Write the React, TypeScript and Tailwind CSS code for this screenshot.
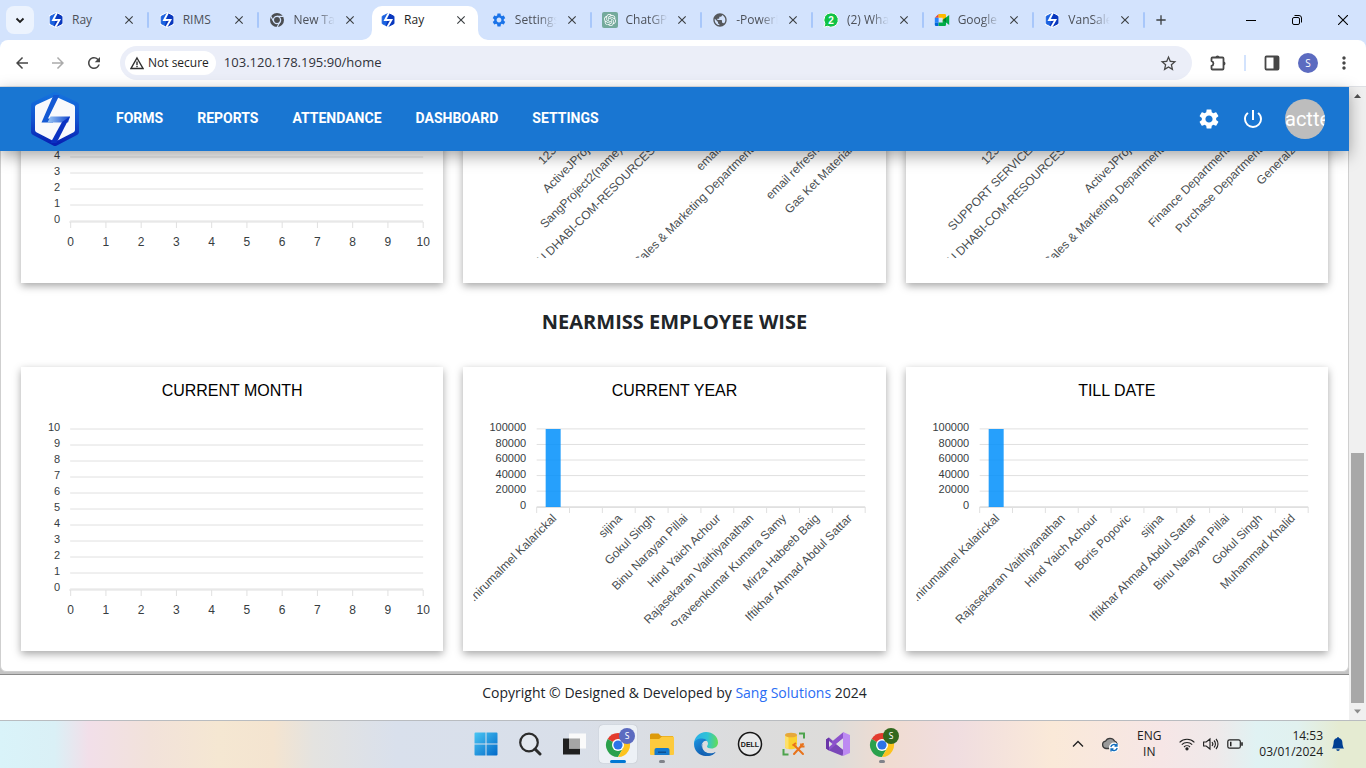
import { useId, type ReactNode } from 'react';
import { BsBellFill } from 'react-icons/bs';
import {
  MdAdd,
  MdArrowBack,
  MdArrowForward,
  MdClose,
  MdMoreVert,
  MdPowerSettingsNew,
  MdPublic,
  MdRefresh,
  MdSettings,
  MdStarBorder,
} from 'react-icons/md';
import { SiOpenai } from 'react-icons/si';

/* ---------- logos ---------- */

function RayMark({ className }: { className: string }) {
  return (
    <svg viewBox="0 0 16 16" className={className} aria-hidden="true">
      <path d="M8 .8 14.300 4v8L8 15.200 1.700 12V4z" fill="#fff" stroke="#fff" strokeWidth="1.500" strokeLinejoin="round" />
      <path d="M8 1.500 13.800 4.400v7.200L8 14.500l-5.800-2.900V4.400z" fill="#1b62e0" stroke="#1b62e0" strokeLinejoin="round" />
      <path d="M9.500 2 13.800 4.400v7.200L8 14.500l-1.500-.8z" fill="#0a37bd" stroke="#0a37bd" strokeLinejoin="round" />
      <path d="M8.800 1 5 8h3.800M7 7.800h4.500L7.400 15" fill="none" stroke="#fff" strokeWidth="1.800" />
    </svg>
  );
}

function RayLogo() {
  const id = useId();
  return (
    <svg viewBox="0 0 50 56" className="h-14 w-[50px]" aria-hidden="true">
      <defs>
        <linearGradient id={id + 'h'} x1="0" y1="0" x2="0" y2="1">
          <stop offset="0" stopColor="#1470dc" />
          <stop offset="0.5" stopColor="#1254d0" />
          <stop offset="1" stopColor="#0722b4" />
        </linearGradient>
        <linearGradient id={id + 'b'} x1="0" y1="0" x2="1" y2="0">
          <stop offset="0" stopColor="#9cc8f6" />
          <stop offset="1" stopColor="#0f45cc" />
        </linearGradient>
      </defs>
      <path
        d="M25 4 46 14v27L25 52 4 41V14z"
        fill={`url(#${id}h)`}
        stroke={`url(#${id}h)`}
        strokeWidth="6"
        strokeLinejoin="round"
      />
      <path d="M25 8 42.500 16v23L25 48 7.500 39V16z" fill="#f8f9fc" stroke="#f8f9fc" strokeWidth="5" strokeLinejoin="round" />
      <path d="M23.500 4h6L18 27.500h5v4H11.500z" fill="#1459d4" />
      <path d="M20.500 25.500H40L38 31.500H17.500z" fill={`url(#${id}b)`} />
      <path d="M32 31 20.500 52h6L40 25.500z" fill="#0a31c2" />
    </svg>
  );
}

function ChromeGray() {
  return (
    <svg viewBox="0 0 16 16" className="size-4" aria-hidden="true">
      <circle cx="8" cy="8" r="7" fill="#4a4d51" />
      <circle cx="8" cy="8" r="3.600" fill="none" stroke="#d3e3fd" strokeWidth="1.300" />
      <path d="M8 4.400h6.400M4.900 9.800 1.700 4.300M11.100 9.800 8 15.200" stroke="#d3e3fd" strokeWidth="1.200" />
    </svg>
  );
}

function WhatsAppBadge() {
  return (
    <svg viewBox="0 0 16 16" className="size-4" aria-hidden="true">
      <path d="M8 .8a7.200 7.200 0 1 1-3.400 13.500L.9 15.200l1-3.500A7.200 7.200 0 0 1 8 .8z" fill="#10c245" stroke="#fff" />
      <text x="8" y="11.700" textAnchor="middle" fill="#fff" fontSize="10" fontWeight="700" fontFamily="Liberation Sans, sans-serif">
        2
      </text>
    </svg>
  );
}

function MeetLogo() {
  return (
    <svg viewBox="0 0 16 16" className="size-4" aria-hidden="true">
      <path d="M.8 5.800 4.600 2v3.800z" fill="#ea4335" />
      <path d="M.8 5.800h3.800v4.700H.8z" fill="#2684fc" />
      <path d="M.8 10.500h3.800V14H2a1.200 1.200 0 0 1-1.200-1.200z" fill="#0066da" />
      <path d="M4.600 2h6.200a1.200 1.200 0 0 1 1.200 1.200V8l-3.300 2V5.800H4.600z" fill="#ffba00" />
      <path d="M8.700 10.500V8L15.200 3v10L12 10.500v2.300a1.200 1.200 0 0 1-1.200 1.200H4.600v-3.500z" fill="#00ac47" />
      <path d="M12 5.500V10.500L9 8z" fill="#00832d" />
    </svg>
  );
}

function ChatGptLogo() {
  return (
    <span className="flex size-4 items-center justify-center rounded-xs bg-[#74aa9c] text-white">
      <SiOpenai className="size-3" />
    </span>
  );
}

/* ---------- browser chrome ---------- */

type TabInfo = { title: string; icon: ReactNode; fade?: boolean; active?: boolean; divider?: boolean };

const ray = <RayMark className="size-4" />;

const tabs: TabInfo[] = [
  { title: 'Ray', icon: ray, divider: true },
  { title: 'RIMS', icon: ray, divider: true },
  { title: 'New Tab', icon: <ChromeGray />, fade: true },
  { title: 'Ray', icon: ray, active: true },
  { title: 'Settings', icon: <MdSettings className="size-4 text-[#1a73e8]" />, fade: true, divider: true },
  { title: 'ChatGPT', icon: <ChatGptLogo />, fade: true, divider: true },
  { title: '-PowerB', icon: <MdPublic className="size-4 text-[#55585c]" />, fade: true, divider: true },
  { title: '(2) Wha', icon: <WhatsAppBadge />, fade: true, divider: true },
  { title: 'Google', icon: <MeetLogo />, fade: true, divider: true },
  { title: 'VanSale', icon: ray, fade: true, divider: true },
];

function Tab({ tab }: { tab: TabInfo }) {
  return (
    <div className="relative flex min-w-0 flex-1 pt-[6px]">
      {tab.active && (
        <svg viewBox="0 0 126 34" preserveAspectRatio="none" className="absolute -left-2 bottom-0 h-[34px] w-[126px]" aria-hidden="true">
          <path d="M0 34a10 10 0 0 0 10-10V10A10 10 0 0 1 20 0h86a10 10 0 0 1 10 10v14a10 10 0 0 0 10 10z" fill="#fff" />
        </svg>
      )}
      <div className="relative flex h-7 min-w-0 flex-1 items-center pl-[10px] pr-[10px]">
        <span className="flex size-4 shrink-0 items-center justify-center">{tab.icon}</span>
        <span
          className={
            'ml-2 w-11 shrink-0 overflow-hidden whitespace-nowrap text-xs ' +
            (tab.active ? 'text-[#1f1f1f] ' : 'text-[#4c5058] ') +
            (tab.fade ? '[mask-image:linear-gradient(to_right,black_55%,transparent_95%)]' : '')
          }
        >
          {tab.title}
        </span>
        <button type="button" aria-label={'Close ' + tab.title} className="ml-auto flex size-4 shrink-0 items-center justify-center text-[#3c4043]">
          <MdClose className="size-3.5" />
        </button>
      </div>
      {tab.divider && <span className="my-[6px] h-4 w-0.5 shrink-0 rounded-full bg-[#a8c7fa]" />}
      {!tab.divider && <span className="w-0.5 shrink-0" />}
    </div>
  );
}

function TabStrip() {
  return (
    <div className="flex h-10 shrink-0 bg-[#d3e3fd] pl-[6px]">
      <button type="button" aria-label="Search tabs" className="mt-[6px] flex size-7 shrink-0 items-center justify-center rounded-lg bg-[#ecf3fe]">
        <svg viewBox="0 0 12 12" className="size-3" aria-hidden="true">
          <path d="m2.500 4.500 3.500 3.500 3.500-3.500" fill="none" stroke="#1f1f1f" strokeWidth="1.800" />
        </svg>
      </button>
      <div className="ml-1 flex min-w-0 max-w-[1107px] flex-1">
        {tabs.map((t, i) => (
          <Tab key={i} tab={t} />
        ))}
      </div>
      <button type="button" aria-label="New tab" className="flex w-8 items-center justify-center text-[#3c4043]">
        <MdAdd className="size-4" />
      </button>
      <div className="ml-auto flex shrink-0">
        <button type="button" aria-label="Minimize" className="flex w-[46px] items-center justify-center">
          <span className="h-px w-[10px] bg-black" />
        </button>
        <button type="button" aria-label="Restore" className="flex w-[46px] items-center justify-center">
          <svg viewBox="0 0 10 10" className="size-[10px]" fill="none" stroke="#000" aria-hidden="true">
            <rect x="0.500" y="2.500" width="7" height="7" rx="1.500" />
            <path d="M2.500.5h4.500a2.500 2.500 0 0 1 2.500 2.500v4.500" />
          </svg>
        </button>
        <button type="button" aria-label="Close window" className="flex w-[46px] items-center justify-center">
          <svg viewBox="0 0 10 10" className="size-[10px]" fill="none" stroke="#000" aria-hidden="true">
            <path d="m0 0 10 10M10 0 0 10" strokeWidth="1.100" />
          </svg>
        </button>
      </div>
    </div>
  );
}

function AddressBar() {
  return (
    <div className="shrink-0 bg-[#d3e3fd]">
      <div className="flex h-[47px] items-center rounded-t-lg border-b border-[#dfe1e5] bg-white pl-1 text-[#474747]">
        <button type="button" aria-label="Back" className="flex w-9 justify-center">
          <MdArrowBack className="size-[18px]" />
        </button>
        <button type="button" aria-label="Forward" className="flex w-9 justify-center text-[#ababab]">
          <MdArrowForward className="size-[18px]" />
        </button>
        <button type="button" aria-label="Reload" className="flex w-9 justify-center">
          <MdRefresh className="size-[18px]" />
        </button>
        <div className="ml-2 flex h-[34px] flex-1 items-center rounded-full bg-[#ebeef8] pl-[5px]">
          <button type="button" className="flex h-6 items-center gap-1 rounded-full bg-white px-[5px] pr-[7px] text-xs text-[#1f1f1f]">
            <svg viewBox="0 0 14 14" className="size-[14px]" fill="none" stroke="#303030" strokeWidth="1.400" aria-hidden="true">
              <path d="M7 2 13 12.500H1z" />
              <path d="M7 5.500v3.500M7 9.800v1.400" />
            </svg>
            Not secure
          </button>
          <input
            aria-label="Address"
            defaultValue="103.120.178.195:90/home"
            className="ml-2 min-w-0 flex-1 bg-transparent text-[13px] text-[#30323a] outline-none"
          />
          <button type="button" aria-label="Bookmark" className="flex w-12 justify-center">
            <MdStarBorder className="size-[19px]" />
          </button>
        </div>
        <div className="flex items-center">
          <button type="button" aria-label="Extensions" className="flex w-[52px] justify-center">
            <svg viewBox="0 0 18 18" className="size-[18px]" aria-hidden="true">
              <path
                d="M2.500 4.500a1 1 0 0 1 1-1h10a1 1 0 0 1 1 1v10a1 1 0 0 1-1 1h-10a1 1 0 0 1-1-1v-2.700a2.400 2.400 0 0 0 0-4.700z"
                fill="none"
                stroke="#474747"
                strokeWidth="1.800"
                strokeLinejoin="round"
              />
              <path d="M6.500 3.500a2 2 0 0 1 4 0zM14.500 7.500a2 2 0 0 1 0 4z" fill="#474747" />
            </svg>
          </button>
          <span className="h-4 w-0.5 bg-[#d3e3fd]" />
          <button type="button" aria-label="Side panel" className="flex w-[52px] justify-center">
            <svg viewBox="0 0 16 16" className="size-4" aria-hidden="true">
              <rect x="1.500" y="1.500" width="13" height="13" rx="1" fill="none" stroke="#474747" strokeWidth="1.800" />
              <path d="M9.500 1h5v14h-5z" fill="#474747" />
            </svg>
          </button>
          <button type="button" aria-label="Profile" className="mr-1 flex size-5 items-center justify-center rounded-full bg-[#5c6bc0] text-[10px] text-white">
            S
          </button>
          <button type="button" aria-label="Menu" className="flex w-11 justify-center">
            <MdMoreVert className="size-5" />
          </button>
        </div>
      </div>
    </div>
  );
}

/* ---------- charts ---------- */

function Card({ title, children }: { title: string; children: ReactNode }) {
  return (
    <section className="min-w-0 bg-white pt-3 shadow-[0_3px_8px_rgba(0,0,0,0.35)]">
      <h3 className="text-center font-['Liberation_Sans',sans-serif] text-base text-black">{title}</h3>
      {children}
    </section>
  );
}

const steps = [0, 1, 2, 3, 4, 5, 6, 7, 8, 9, 10];

function EmptyChart() {
  return (
    <svg viewBox="0 0 422 248" className="block h-[248px] w-full font-['Liberation_Sans',sans-serif]" role="img" aria-label="No data">
      {steps.map((n) => (
        <g key={n}>
          <path d={`M49 ${186 - n * 16}H402`} stroke="#e0e0e0" />
          <text x="39" y={188 - n * 16} fontSize="11" textAnchor="end" fill="#373d3f">
            {n}
          </text>
          <path d={`M${49.5 + n * 35.25} 187v6`} stroke="#e0e0e0" />
          <text x={49.5 + n * 35.25} y="211" fontSize="12" textAnchor="middle" fill="#373d3f">
            {n}
          </text>
        </g>
      ))}
      <path d="M48 187H402" stroke="#e0e0e0" />
    </svg>
  );
}

function BarChart({ labels }: { labels: string[] }) {
  const id = useId();
  const left = 73.5;
  const cell = 32.85;
  const right = left + cell * 10;
  return (
    <svg viewBox="0 0 422 248" className="block h-[248px] w-full font-['Liberation_Sans',sans-serif]" role="img" aria-label="Bar chart">
      <clipPath id={id}>
        <rect x="10" y="0" width="402" height="223" />
      </clipPath>
      {[0, 20000, 40000, 60000, 80000, 100000].map((v, i) => (
        <g key={v}>
          <path d={`M${left} ${103.7 - i * 15.56}H${right}`} stroke="#e0e0e0" />
          <text x="63" y={106 - i * 15.56} fontSize="11" textAnchor="end" fill="#373d3f">
            {v}
          </text>
        </g>
      ))}
      <path d={`M${left} 104.500H${right}`} stroke="#e0e0e0" />
      {steps.map((n) => (
        <path key={n} d={`M${left + n * cell} 104v6`} stroke="#e0e0e0" />
      ))}
      <rect x="82.500" y="26" width="15" height="78" fill="#008ffb" fillOpacity="0.85" />
      <g clipPath={`url(#${id})`}>
        {labels.map((label, i) => (
          <text
            key={i}
            transform={`translate(${left + cell * (i + 0.5) + 4} 116) rotate(-45)`}
            fontSize="12"
            textAnchor="end"
            fill="#4a4f52"
          >
            {label}
          </text>
        ))}
      </g>
    </svg>
  );
}

const projectYear = [
  '123',
  'ActiveJProj',
  'SangProject2(name)',
  'ABU DHABI-COM-RESOURCES',
  '',
  'email',
  'Sales & Marketing Department',
  '',
  'email refresh',
  'Gas Ket Material',
];
const projectTotal = [
  '123',
  'SUPPORT SERVICE',
  'ABU DHABI-COM-RESOURCES',
  '',
  'ActiveJProj',
  'Sales & Marketing Department',
  '',
  'Finance Department',
  'Purchase Department',
  'Generalz',
];
const employeeYear = [
  '.nirumalmel Kalarickal',
  '',
  'sijina',
  'Gokul Singh',
  'Binu Narayan Pillai',
  'Hind Yaich Achour',
  'Rajasekaran Vaithiyanathan',
  'Praveenkumar Kumara Samy',
  'Mirza Habeeb Baig',
  'Iftikhar Ahmad Abdul Sattar',
];
const employeeTotal = [
  '.nirumalmel Kalarickal',
  '',
  'Rajasekaran Vaithiyanathan',
  'Hind Yaich Achour',
  'Boris Popovic',
  'sijina',
  'Iftikhar Ahmad Abdul Sattar',
  'Binu Narayan Pillai',
  'Gokul Singh',
  'Muhammad Khalid',
];

function ChartRow({ year, total }: { year: string[]; total: string[] }) {
  return (
    <div className="grid grid-cols-3 gap-5">
      <Card title="CURRENT MONTH">
        <EmptyChart />
      </Card>
      <Card title="CURRENT YEAR">
        <BarChart labels={year} />
      </Card>
      <Card title="TILL DATE">
        <BarChart labels={total} />
      </Card>
    </div>
  );
}

/* ---------- page ---------- */

const menu = ['FORMS', 'REPORTS', 'ATTENDANCE', 'DASHBOARD', 'SETTINGS'];

function Header() {
  return (
    <header className="relative z-10 flex h-16 shrink-0 items-center bg-[#1976d2] pl-[30px] pr-6 font-[Roboto,sans-serif] text-white shadow-[0_5px_15px_rgba(0,0,0,0.35)]">
      <RayLogo />
      <nav className="ml-9 flex gap-[34px] pb-0.5 text-sm font-bold">
        {menu.map((m) => (
          <a key={m} href="#">
            {m}
          </a>
        ))}
      </nav>
      <div className="ml-auto flex items-center gap-5">
        <button type="button" aria-label="Settings">
          <MdSettings className="size-6" />
        </button>
        <button type="button" aria-label="Log out">
          <MdPowerSettingsNew className="size-6" />
        </button>
        <span className="flex size-10 items-center overflow-hidden rounded-full bg-[#bdbdbd] text-xl">actte</span>
      </div>
    </header>
  );
}

function Scrollbar() {
  return (
    <div className="flex w-[17px] shrink-0 flex-col bg-[#f0f0f0]" aria-hidden="true">
      <svg viewBox="0 0 17 17" className="size-[17px]">
        <path d="M5 11h7L8.500 7z" fill="#505050" />
      </svg>
      <div className="flex flex-1 flex-col justify-end px-0.5">
        <div className="h-5/12 bg-[#a8a8a8]" />
      </div>
      <svg viewBox="0 0 17 17" className="size-[17px]">
        <path d="M5 6.500h7l-3.500 4z" fill="#8c8c8c" />
      </svg>
    </div>
  );
}

/* ---------- taskbar ---------- */

function ChromeIcon({ badge, color }: { badge: string; color: string }) {
  return (
    <svg viewBox="-1 0 32 32" className="size-8 overflow-visible" aria-hidden="true">
      <path d="M15 17 4.600 11A12 12 0 0 1 25.400 11z" fill="#e33b2e" />
      <path d="M4.600 11A12 12 0 0 0 15 29l5.200-9z" fill="#2aa14c" />
      <path d="M25.400 11A12 12 0 0 1 15 29l5.200-9L15 11z" fill="#fcc31e" />
      <circle cx="15" cy="17" r="6" fill="#fff" />
      <circle cx="15" cy="17" r="4.600" fill="#2b73e8" />
      <circle cx="24" cy="8" r="8" fill={color} />
      <text x="24" y="11" textAnchor="middle" fontSize="8.500" fill="#fff" fontFamily="Noto Sans, sans-serif">
        {badge}
      </text>
    </svg>
  );
}

function StartIcon() {
  const id = useId();
  return (
    <svg viewBox="0 0 24 24" className="size-6" aria-hidden="true">
      <linearGradient id={id} x1="0" y1="0" x2="24" y2="24" gradientUnits="userSpaceOnUse">
        <stop offset="0" stopColor="#4cc8f4" />
        <stop offset="1" stopColor="#0067c8" />
      </linearGradient>
      <path d="M.5 1.500a1 1 0 0 1 1-1h10v11h-11zM12.500.5h10a1 1 0 0 1 1 1v10h-11zM.5 12.500h11v11h-10a1 1 0 0 1-1-1zM12.500 12.500h11v10a1 1 0 0 1-1 1h-10z" fill={`url(#${id})`} />
    </svg>
  );
}

function SearchGlyph() {
  return (
    <svg viewBox="0 0 24 24" className="size-6" fill="none" stroke="#2b2b2b" aria-hidden="true">
      <circle cx="11" cy="10.500" r="8.800" strokeWidth="2.200" fill="#e2e7ee" />
      <path d="m17 17 5 5" strokeWidth="3" strokeLinecap="round" />
    </svg>
  );
}

function TaskViewGlyph() {
  return (
    <svg viewBox="0 0 24 24" className="size-6" aria-hidden="true">
      <path d="M1 6.500h17v16H1z" fill="#202020" />
      <path d="M7 1.500h17v15H7z" fill="#fafafa" />
      <path d="M7 6.500h11v10H7z" fill="#a5a5a5" />
    </svg>
  );
}

function FolderGlyph() {
  return (
    <svg viewBox="0 0 26 26" className="size-[26px]" aria-hidden="true">
      <path d="M1 4a1.500 1.500 0 0 1 1.500-1.500h7L12 5h12v4H1z" fill="#dd9a0b" />
      <path d="M1 8h9l3-2.500h11a1 1 0 0 1 1 1V23a1 1 0 0 1-1 1H2a1 1 0 0 1-1-1z" fill="#fdca3d" />
      <path d="M5.500 24v-5a2 2 0 0 1 2-2h11a2 2 0 0 1 2 2v5z" fill="#1379ce" />
      <path d="M9 20.500h8v1.500H9z" fill="#0b4f92" />
    </svg>
  );
}

function EdgeGlyph() {
  const id = useId();
  return (
    <svg viewBox="0 0 26 26" className="size-[26px]" aria-hidden="true">
      <linearGradient id={id + 'a'} x1="1" y1="8" x2="25" y2="10" gradientUnits="userSpaceOnUse">
        <stop offset="0" stopColor="#2bafe8" />
        <stop offset="0.550" stopColor="#2fc3d6" />
        <stop offset="1" stopColor="#62dd55" />
      </linearGradient>
      <linearGradient id={id + 'b'} x1="2" y1="10" x2="14" y2="25" gradientUnits="userSpaceOnUse">
        <stop offset="0" stopColor="#1b8fdc" />
        <stop offset="1" stopColor="#0f4fa3" />
      </linearGradient>
      <path d="M1 13C1 6 6.500 1 13 1s12 4.600 12 10.500c0 3.800-3 6-6.500 6-2.800 0-4.500-1-4.500-2 0-.8 1-1.200 1-3 0-2.300-2-4-5-4-4.500 0-9 2.500-9 4.500z" fill={`url(#${id}a)`} />
      <path d="M1 13c0-3.500 3.500-5.500 8-5.500 2 0 4 .8 5 2-3.500 0-5.500 3-5.500 6 0 4.500 4.500 7 9 7 2 0 3.800-.7 5-1.500C20.500 23.500 17 25 13 25 6.200 25 1 19.700 1 13z" fill={`url(#${id}b)`} />
      <path d="M9.800 12.500c-2 4 1 10 8 10 2 0 4-.6 5-1.500C20.500 24 17 25 14 25 8 24 6.500 16 9.800 12.500z" fill="#1668b8" />
    </svg>
  );
}

function DellGlyph() {
  return (
    <svg viewBox="0 0 26 26" className="size-[26px]" aria-hidden="true">
      <circle cx="13" cy="13" r="11.500" fill="#e8e9ea" stroke="#161616" strokeWidth="1.500" />
      <text x="13" y="15.500" textAnchor="middle" fontSize="7" fontWeight="700" fill="#161616" fontFamily="Liberation Sans, sans-serif">
        DELL
      </text>
    </svg>
  );
}

function DatabaseGlyph() {
  return (
    <svg viewBox="0 0 26 26" className="size-[26px]" aria-hidden="true">
      <path d="M18 2.500h5v5M2.500 18v5.500h5" fill="none" stroke="#4da34d" strokeWidth="2" />
      <path d="M4 4v12c0 1.400 2.800 2.200 6 2.200s6-.8 6-2.200V4z" fill="#fbd12e" />
      <path d="M4 4v12c0 1 1.500 1.700 3.500 2V4z" fill="#fde06a" />
      <ellipse cx="10" cy="4" rx="6" ry="2.300" fill="#e6a83a" />
      <path d="m13 14 9 9M22 13l-9 10" stroke="#e8731c" strokeWidth="2" strokeLinecap="round" />
      <path d="m11.500 14.500 3.500-2.500M20 12.500v3h3.500" stroke="#e8731c" strokeWidth="1.800" fill="none" />
    </svg>
  );
}

function VisualStudioGlyph() {
  return (
    <svg viewBox="0 0 26 26" className="size-[26px]" aria-hidden="true">
      <path d="M1 8.500 4 6.500l15 13-1.500 5.500L4 19.500 1 17.500z" fill="#7a47b8" />
      <path d="M1 8.500v9l3 2V6.500z" fill="#6a35a8" />
      <path d="M4 19.500 18.500 7v-6L4 13z" fill="#8c52cc" />
      <path d="m18 1 7 3v18l-7 3z" fill="#bd8af2" />
      <path d="m18 7.500-7 5.500 7 5.500z" fill="#dfe0e2" />
      <path d="m4 10 3.500 3L4 16z" fill="#dfe0e2" />
    </svg>
  );
}

type App = { name: string; icon: ReactNode; state?: 'active' | 'open' };

const apps: App[] = [
  { name: 'Start', icon: <StartIcon /> },
  { name: 'Search', icon: <SearchGlyph /> },
  { name: 'Task View', icon: <TaskViewGlyph /> },
  { name: 'Google Chrome', icon: <ChromeIcon badge="S" color="#5c6bc0" />, state: 'active' },
  { name: 'File Explorer', icon: <FolderGlyph />, state: 'open' },
  { name: 'Microsoft Edge', icon: <EdgeGlyph /> },
  { name: 'Dell', icon: <DellGlyph /> },
  { name: 'Database tools', icon: <DatabaseGlyph /> },
  { name: 'Visual Studio', icon: <VisualStudioGlyph /> },
  { name: 'Google Chrome 2', icon: <ChromeIcon badge="S" color="#33691e" />, state: 'open' },
];

function Taskbar() {
  return (
    <footer className="grid h-12 shrink-0 grid-cols-[1fr_auto_1fr] border-t border-[#b9bcc0] bg-[linear-gradient(90deg,#d9f3f9_0%,#daf0f6_4%,#f2dfe9_6.5%,#f2e2da_11%,#f5e7d2_16%,#f4e4d0_20%,#e4e3e0_23%,#d9e0ec_29%,#d9dfe9_42%,#dcdcdc_55%,#dddcda_61%,#f0dcd1_65%,#f0dde0_70%,#fae9d8_77%,#f6e6e6_85%,#efe9ea_89%,#e0f2f3_92%,#e1f1ef_95%,#e5ebd2_98%)] text-xs text-[#202020]">
      <div />
      <div className="flex pb-0.5 pl-0.5">
        {apps.map((a) => (
          <button key={a.name} type="button" aria-label={a.name} className="relative flex w-11 items-center justify-center">
            <span
              className={
                'flex h-[38px] w-[38px] items-center justify-center rounded ' + (a.state === 'active' ? 'bg-[#edf1f6] shadow-[0_0_1px_#9aa0aa]' : '')
              }
            >
              {a.icon}
            </span>
            {a.state === 'active' && <span className="absolute bottom-[3px] h-[3px] w-4 rounded-full bg-[#0078d4]" />}
            {a.state === 'open' && <span className="absolute bottom-[3px] h-[3px] w-[6px] rounded-full bg-[#80838a]" />}
          </button>
        ))}
      </div>
      <div className="flex items-center justify-end pb-0.5 pr-[21px]">
        <svg viewBox="0 0 12 12" className="size-3" fill="none" stroke="#202020" strokeWidth="1.300" aria-hidden="true">
          <path d="m1 8.500 5-5 5 5" />
        </svg>
        <svg viewBox="0 0 18 18" className="ml-[17px] size-[18px]" aria-hidden="true">
          <path d="M5 13.500a3.700 3.700 0 0 1-.5-7.300A5 5 0 0 1 13.500 6 3.500 3.500 0 0 1 16 9l-5 4.500z" fill="#9a9a9a" stroke="#3c3c3c" strokeWidth="1.300" />
          <circle cx="13" cy="12.500" r="5" fill="#fff" />
          <path d="M9.800 12a3.300 3.300 0 0 1 5.600-1.600M16.200 13a3.300 3.300 0 0 1-5.600 1.600M16 8.500v2.500h-2.500M10 16.500V14h2.500" fill="none" stroke="#0f6cbd" strokeWidth="1.300" />
        </svg>
        <div className="ml-[14px] w-8 text-center leading-4">
          <div>ENG</div>
          <div>IN</div>
        </div>
        <svg viewBox="0 0 16 16" className="ml-[14px] size-4" fill="none" stroke="#202020" strokeWidth="1.100" aria-hidden="true">
          <path d="M.6 6.300a10.500 10.500 0 0 1 14.800 0M2.800 8.700a7.400 7.400 0 0 1 10.400 0M5 11a4.300 4.300 0 0 1 6 0" />
          <circle cx="8" cy="12.800" r="1.100" fill="#202020" />
        </svg>
        <svg viewBox="0 0 16 16" className="ml-2 size-4" fill="none" stroke="#202020" strokeWidth="1.100" aria-hidden="true">
          <path d="M.6 6v4h2.600L7 13V3L3.200 6zM9 6a3 3 0 0 1 0 4M11 4.500a5 5 0 0 1 0 7M13 3a7.300 7.300 0 0 1 0 10" />
        </svg>
        <svg viewBox="0 0 16 16" className="ml-2 size-4" fill="none" stroke="#202020" strokeWidth="1.200" aria-hidden="true">
          <rect x="0.800" y="3.800" width="12.500" height="8.400" rx="1.800" />
          <path d="M3 5.800h1.500v4.400H3z" fill="#202020" stroke="none" />
          <path d="M15 6.300v3.400" strokeWidth="1.600" />
        </svg>
        <div className="ml-4 text-right leading-4">
          <div>14:53</div>
          <div>03/01/2024</div>
        </div>
        <BsBellFill className="ml-2 size-[14px] text-[#003e92]" />
      </div>
    </footer>
  );
}

export default function App() {
  return (
    <div className="flex h-screen flex-col overflow-hidden bg-white font-['Open_Sans','Noto_Sans',sans-serif]">
      <TabStrip />
      <AddressBar />
      <div className="flex min-h-0 flex-1">
        <div className="flex min-w-0 flex-1 flex-col">
          <Header />
          <main className="flex min-h-0 flex-1 flex-col justify-end overflow-hidden bg-[#c4c4c4] pb-0.5">
            <div className="shrink-0 rounded-b-md border border-[#cfcfcf] bg-white px-5 pb-5">
              <ChartRow year={projectYear} total={projectTotal} />
              <h2 className="flex h-[84px] items-center justify-center pb-1.5 text-xl font-bold text-[#212529]">NEARMISS EMPLOYEE WISE</h2>
              <ChartRow year={employeeYear} total={employeeTotal} />
            </div>
          </main>
          <div className="h-[46px] shrink-0 border-t border-[#8a8a8a] pt-2 text-center text-sm text-[#212529]">
            Copyright © Designed &amp; Developed by{' '}
            <a href="#" className="text-[#2a6df4]">
              Sang Solutions
            </a>{' '}
            2024
          </div>
        </div>
        <Scrollbar />
      </div>
      <Taskbar />
    </div>
  );
}
